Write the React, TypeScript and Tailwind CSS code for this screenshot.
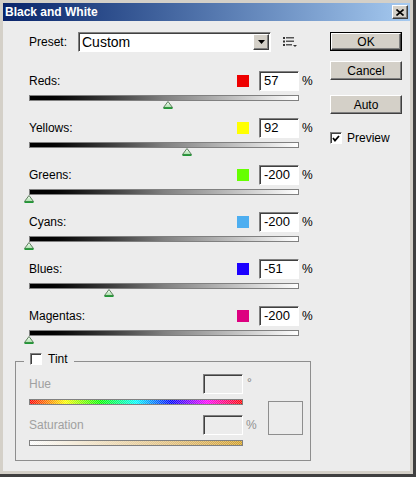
import React from "react";

const sunken =
  "border border-t-[#808080] border-l-[#808080] border-b-white border-r-white shadow-[inset_1px_1px_0_#404040]";
const raised =
  "border border-t-white border-l-white border-b-[#404040] border-r-[#404040] shadow-[inset_-1px_-1px_0_#808080]";

const channels = [
  { name: "Reds", value: 57, color: "#ee0000" },
  { name: "Yellows", value: 92, color: "#ffff00" },
  { name: "Greens", value: -200, color: "#66ff00" },
  { name: "Cyans", value: -200, color: "#4daef0" },
  { name: "Blues", value: -51, color: "#1c00ff" },
  { name: "Magentas", value: -200, color: "#dd0080" },
];

const Thumb = () => (
  <svg width="10" height="8" viewBox="0 0 10 8">
    <defs>
      <linearGradient id="tg" x1="0" y1="0" x2="0" y2="1">
        <stop offset="0" stopColor="#ffffff" />
        <stop offset="1" stopColor="#a8e0a8" />
      </linearGradient>
    </defs>
    <path d="M5 0.5 L9.5 6.5 L0.5 6.5 Z" fill="url(#tg)" stroke="#5f7f5f" />
    <path d="M0.5 7.2 H9.5" stroke="#1f9a35" strokeWidth="1.6" />
  </svg>
);

const Slider = ({ name, value, color }: { name: string; value: number; color: string }) => {
  const pos = ((value + 200) / 500) * 270;
  return (
    <div className="pl-[14px] h-[47px]">
      <div className="flex items-center h-[20px]">
        <span className="flex-1 text-[12px]">{name}:</span>
        <div className="w-[12px] h-[12px] mr-[10px]" style={{ backgroundColor: color }} />
        <div className={`w-[40px] h-[20px] bg-white flex items-center pl-[4px] text-[13px] ${sunken}`}>
          {value}
        </div>
        <span className="w-[14px] pl-[3px] text-[12px]">%</span>
      </div>
      <div className="mt-[4px] w-[270px] h-[6px] border border-[#808080] bg-gradient-to-r from-black via-[#808080] to-white" />
      <div className="relative w-[270px] h-[8px]">
        <div className="absolute top-0" style={{ left: pos - 5 }}>
          <Thumb />
        </div>
      </div>
    </div>
  );
};

const Dither = () => (
  <div className="absolute inset-0 bg-[repeating-conic-gradient(#ececec_0%_25%,transparent_0%_50%)] bg-[length:2px_2px] opacity-40" />
);

const App = () => {
  return (
    <div className="w-[416px] h-[477px] bg-[#d4d0c8] border-r-[3px] border-b-[3px] border-r-[#404040] border-b-[#404040] p-[3px] font-['Liberation_Sans',Arial,sans-serif] text-black overflow-hidden">
      {/* Title bar */}
      <div className="h-[18px] flex items-center bg-gradient-to-r from-[#0a246a] to-[#a6caf0] pl-[2px]">
        <span className="flex-1 text-white font-bold text-[12px] leading-none">Black and White</span>
        <div className={`w-[16px] h-[14px] mr-[2px] bg-[#d4d0c8] flex items-center justify-center ${raised}`}>
          <svg width="8" height="7" viewBox="0 0 8 7">
            <path d="M0.5 0.5 L7.5 6.5 M7.5 0.5 L0.5 6.5" stroke="#000" strokeWidth="1.6" />
          </svg>
        </div>
      </div>

      {/* Body */}
      <div className="h-[450px] bg-[#ececec] flex pt-[11px] pl-[12px]">
        {/* Left column */}
        <div className="w-[298px]">
          <div className="flex items-center h-[20px] pl-[14px]">
            <span className="w-[49px] text-[12px]">Preset:</span>
            <div className={`w-[193px] h-[20px] bg-white flex items-center ${sunken}`}>
              <span className="flex-1 pl-[3px] text-[14px] leading-none">Custom</span>
              <div className={`w-[16px] h-[16px] mr-[1px] bg-[#d4d0c8] flex items-center justify-center ${raised}`}>
                <svg width="7" height="4" viewBox="0 0 7 4">
                  <path d="M0 0 H7 L3.5 4 Z" fill="#000" />
                </svg>
              </div>
            </div>
            <svg className="ml-[12px]" width="14" height="10" viewBox="0 0 14 10">
              <rect x="0" y="0" width="2" height="2" fill="#333" />
              <rect x="3" y="0" width="8" height="1.5" fill="#555" />
              <rect x="0" y="3.5" width="2" height="2" fill="#333" />
              <rect x="3" y="3.5" width="8" height="1.5" fill="#555" />
              <rect x="0" y="7" width="2" height="2" fill="#333" />
              <rect x="3" y="7" width="6" height="1.5" fill="#555" />
              <path d="M10 8 H14 L12 10 Z" fill="#333" />
            </svg>
          </div>

          <div className="mt-[19px]">
            {channels.map((c) => (
              <Slider key={c.name} {...c} />
            ))}
          </div>

          {/* Tint group */}
          <fieldset className="w-[296px] border border-[#8e8e8e] -mt-[1px]">
            <legend className="ml-[8px] px-[6px] h-[18px] flex items-start pt-[1px] gap-[6px]">
              <span className={`w-[12px] h-[12px] bg-white ${sunken}`} />
              <span className="text-[12px] leading-[12px]">Tint</span>
            </legend>
            <div className="flex pl-[13px] pt-[4px] pb-[14px]">
              <div className="w-[228px]">
                <div className="flex items-center h-[20px]">
                  <span className="flex-1 text-[12px] text-[#a0a0a0]">Hue</span>
                  <div className={`w-[40px] h-[20px] bg-[#ececec] ${sunken}`} />
                  <span className="w-[14px] pl-[4px] text-[12px] text-[#808080] self-start">°</span>
                </div>
                <div className="relative mt-[5px] w-[214px] h-[6px] border border-[#808080] bg-[linear-gradient(to_right,#ff0000,#ffff00,#00ff00,#00ffff,#0000ff,#ff00ff,#ff0000)]">
                  <Dither />
                </div>
                <div className="flex items-center h-[20px] mt-[10px]">
                  <span className="flex-1 text-[12px] text-[#a0a0a0]">Saturation</span>
                  <div className={`w-[40px] h-[20px] bg-[#ececec] ${sunken}`} />
                  <span className="w-[14px] pl-[3px] text-[12px] text-[#909090]">%</span>
                </div>
                <div className="relative mt-[5px] w-[214px] h-[6px] border border-[#808080] bg-gradient-to-r from-white to-[#d4a020]">
                  <Dither />
                </div>
              </div>
              <div className="ml-[11px] mt-[27px] w-[35px] h-[34px] border border-[#8e8e8e]" />
            </div>
          </fieldset>
        </div>

        {/* Right column */}
        <div className="ml-[17px] w-[72px]">
          <div className="w-[72px] h-[19px] border border-black flex">
            <button className={`flex-1 bg-[#d4d0c8] text-[12px] flex items-center justify-center ${raised}`}>OK</button>
          </div>
          <button className={`mt-[10px] w-[72px] h-[19px] bg-[#d4d0c8] text-[12px] flex items-center justify-center ${raised}`}>
            Cancel
          </button>
          <button className={`mt-[15px] w-[72px] h-[19px] bg-[#d4d0c8] text-[12px] flex items-center justify-center ${raised}`}>
            Auto
          </button>
          <div className="mt-[15px] flex items-center gap-[5px]">
            <span className={`w-[12px] h-[12px] bg-white flex items-center justify-center ${sunken}`}>
              <svg width="8" height="7" viewBox="0 0 8 7">
                <path d="M1 3 L3 5.5 L7 1" stroke="#000" strokeWidth="1.8" fill="none" />
              </svg>
            </span>
            <span className="text-[12px]">Preview</span>
          </div>
        </div>
      </div>
    </div>
  );
};

export default App;
